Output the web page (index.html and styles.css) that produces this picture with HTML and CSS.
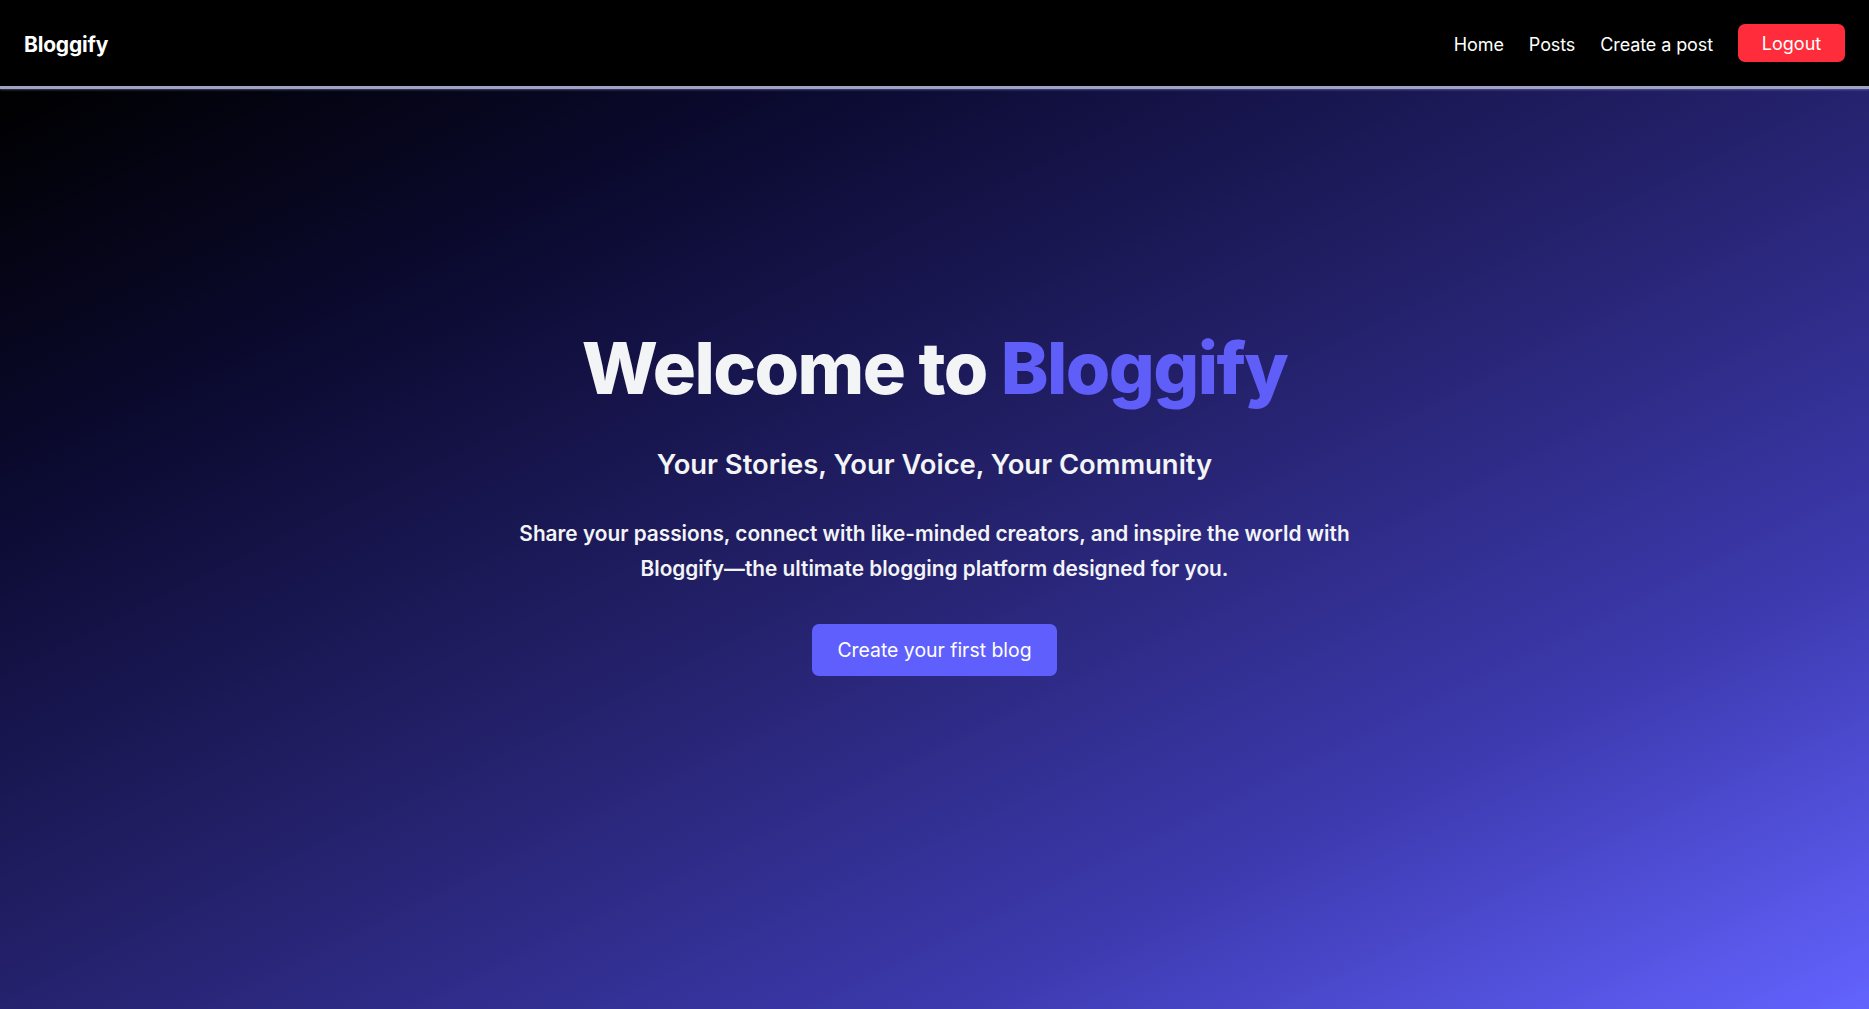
FILE: index.html
```html
<!DOCTYPE html>
<html lang="en">
<head>
<meta charset="utf-8">
<title>Bloggify</title>
<link rel="stylesheet" href="styles.css">
</head>
<body>
  <div class="page">
    <nav class="navbar">
      <a class="brand" href="#">Bloggify</a>
      <div class="nav-links">
        <a class="nav-link" href="#">Home</a>
        <a class="nav-link" href="#">Posts</a>
        <a class="nav-link" href="#">Create a post</a>
        <button class="logout" type="button">Logout</button>
      </div>
    </nav>
    <main class="hero">
      <h1 class="hero-title">Welcome to <span class="accent">Bloggify</span></h1>
      <h2 class="hero-subtitle">Your Stories, Your Voice, Your Community</h2>
      <p class="hero-text">Share your passions, connect with like-minded creators, and inspire the world with Bloggify—the ultimate blogging platform designed for you.</p>
      <button class="cta" type="button">Create your first blog</button>
    </main>
  </div>
</body>
</html>
```

FILE: styles.css
```css
* { box-sizing: border-box; }

html, body {
  margin: 0;
  padding: 0;
  height: 100%;
}

body {
  font-family: Inter, "Noto Sans", "Liberation Sans", sans-serif;
  background: #000;
  color: #fff;
}

.page {
  display: flex;
  flex-direction: column;
  min-height: 100vh;
}

.navbar {
  height: 89px;
  display: flex;
  align-items: center;
  justify-content: space-between;
  padding: 2px 24px 0 24px;
  background: #000;
  border-bottom: 3px solid #9ea3c6;
  box-shadow: 0 1px 2px rgba(160, 165, 210, 0.4);
  position: relative;
  z-index: 1;
}

.brand {
  color: #fff;
  text-decoration: none;
  font-weight: 700;
  font-size: 21px;
  letter-spacing: -0.2px;
}

.nav-links {
  display: flex;
  align-items: center;
  gap: 25px;
}

.nav-link {
  color: #fff;
  text-decoration: none;
  font-size: 18px;
  font-weight: 400;
  letter-spacing: -0.1px;
}

.logout {
  font-family: inherit;
  background: #ff2d3b;
  color: #fff;
  border: none;
  border-radius: 7px;
  font-size: 18px;
  width: 107px;
  height: 38px;
  padding: 0;
  margin-bottom: 2px;
}

.hero {
  flex: 1;
  display: flex;
  flex-direction: column;
  align-items: center;
  justify-content: center;
  text-align: center;
  padding-bottom: 94px;
  background: linear-gradient(to bottom right, #000 0%, #0b0a30 22%, #25226e 50%, #3c39ad 75%, #6363ff 100%);
}

.hero-title {
  margin: 0;
  font-size: 72px;
  font-weight: 800;
  line-height: 1.1;
  letter-spacing: -1.6px;
  color: #f3f4f6;
}

.accent {
  color: #5f5ef8;
}

.hero-subtitle {
  margin: 39px 0 0;
  font-size: 27.4px;
  font-weight: 600;
  line-height: 1.3;
  color: #f3f4f6;
}

.hero-text {
  margin: 35px 0 0;
  max-width: 880px;
  font-size: 20.8px;
  font-weight: 600;
  line-height: 1.67;
  color: #f3f4f6;
}

.cta {
  margin-top: 37px;
  font-family: inherit;
  background: #5f5ffd;
  color: #fff;
  border: none;
  border-radius: 7px;
  font-size: 19.4px;
  font-weight: 400;
  height: 52px;
  padding: 0 25px;
}
```
